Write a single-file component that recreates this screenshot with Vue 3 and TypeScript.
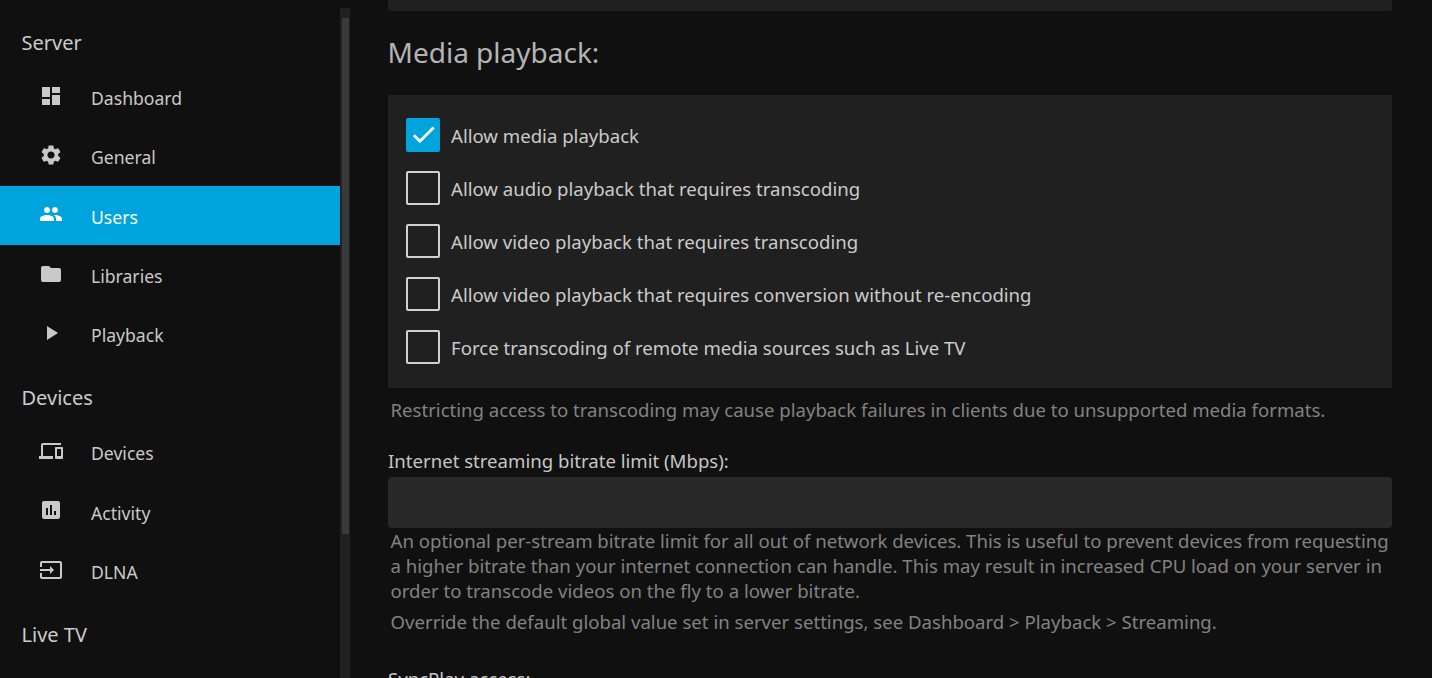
<script setup lang="ts">
interface NavItem {
  label: string
  icon: string
  active?: boolean
}

interface NavSection {
  title: string
  items: NavItem[]
}

const sections: NavSection[] = [
  {
    title: 'Server',
    items: [
      { label: 'Dashboard', icon: 'M3 13h8V3H3v10zm0 8h8v-6H3v6zm10 0h8V11h-8v10zm0-18v6h8V3h-8z' },
      {
        label: 'General',
        icon: 'M19.14 12.94c.04-.3.06-.61.06-.94 0-.32-.02-.64-.07-.94l2.03-1.58c.18-.14.23-.41.12-.61l-1.92-3.32c-.12-.22-.37-.29-.59-.22l-2.39.96c-.5-.38-1.03-.7-1.62-.94l-.36-2.54c-.04-.24-.24-.41-.48-.41h-3.84c-.24 0-.43.17-.47.41l-.36 2.54c-.59.24-1.13.57-1.62.94l-2.39-.96c-.22-.08-.47 0-.59.22L2.74 8.87c-.12.21-.08.47.12.61l2.03 1.58c-.05.3-.09.63-.09.94s.02.64.07.94l-2.03 1.58c-.18.14-.23.41-.12.61l1.92 3.32c.12.22.37.29.59.22l2.39-.96c.5.38 1.03.7 1.62.94l.36 2.54c.05.24.24.41.48.41h3.84c.24 0 .44-.17.47-.41l.36-2.54c.59-.24 1.13-.56 1.62-.94l2.39.96c.22.08.47 0 .59-.22l1.92-3.32c.12-.22.07-.47-.12-.61l-2.01-1.58zM12 15.6c-1.98 0-3.6-1.62-3.6-3.6s1.62-3.6 3.6-3.6 3.6 1.62 3.6 3.6-1.62 3.6-3.6 3.6z',
      },
      {
        label: 'Users',
        active: true,
        icon: 'M16 11c1.66 0 2.99-1.34 2.99-3S17.66 5 16 5c-1.66 0-3 1.34-3 3s1.34 3 3 3zm-8 0c1.66 0 2.99-1.34 2.99-3S9.66 5 8 5C6.34 5 5 6.34 5 8s1.34 3 3 3zm0 2c-2.33 0-7 1.17-7 3.5V19h14v-2.5c0-2.33-4.67-3.5-7-3.5zm8 0c-.29 0-.62.02-.97.05 1.16.84 1.97 1.97 1.97 3.45V19h6v-2.5c0-2.33-4.67-3.5-7-3.5z',
      },
      { label: 'Libraries', icon: 'M10 4H4c-1.1 0-1.99.9-1.99 2L2 18c0 1.1.9 2 2 2h16c1.1 0 2-.9 2-2V8c0-1.1-.9-2-2-2h-8l-2-2z' },
      { label: 'Playback', icon: 'M8 5v14l11-7z' },
    ],
  },
  {
    title: 'Devices',
    items: [
      {
        label: 'Devices',
        icon: 'M4 6h18V4H4c-1.1 0-2 .9-2 2v11H0v3h14v-3H4V6zm19 2h-6c-.55 0-1 .45-1 1v10c0 .55.45 1 1 1h6c.55 0 1-.45 1-1V9c0-.55-.45-1-1-1zm-1 9h-4v-7h4v7z',
      },
      {
        label: 'Activity',
        icon: 'M19 3H5c-1.1 0-2 .9-2 2v14c0 1.1.9 2 2 2h14c1.1 0 2-.9 2-2V5c0-1.1-.9-2-2-2zM9 17H7v-7h2v7zm4 0h-2V7h2v10zm4 0h-2v-4h2v4z',
      },
      {
        label: 'DLNA',
        icon: 'M21 3.01H3c-1.1 0-2 .9-2 2V9h2V4.99h18v14.03H3V15H1v4.01c0 1.1.9 1.98 2 1.98h18c1.1 0 2-.88 2-1.98v-14c0-1.11-.9-2-2-2zM11 16l4-4-4-4v3H1v2h10v3z',
      },
    ],
  },
  {
    title: 'Live TV',
    items: [
      {
        label: 'Live TV',
        icon: 'M21 6h-7.59l3.29-3.29L16 2l-4 4-4-4-.71.71L10.59 6H3c-1.1 0-2 .89-2 2v12c0 1.1.9 2 2 2h18c1.1 0 2-.9 2-2V8c0-1.11-.9-2-2-2zm0 14H3V8h18v12zM9 10v8l6-4z',
      },
    ],
  },
]

const checks = [
  { label: 'Allow media playback', checked: true },
  { label: 'Allow audio playback that requires transcoding', checked: false },
  { label: 'Allow video playback that requires transcoding', checked: false },
  { label: 'Allow video playback that requires conversion without re-encoding', checked: false },
  { label: 'Force transcoding of remote media sources such as Live TV', checked: false },
]
</script>

<template>
  <div class="page">
    <nav class="sidebar">
      <div class="nav-scroll">
        <section v-for="section in sections" :key="section.title" class="nav-section">
          <h3 class="nav-title">{{ section.title }}</h3>
          <a
            v-for="item in section.items"
            :key="item.label"
            class="nav-link"
            :class="{ active: item.active }"
          >
            <svg class="nav-icon" viewBox="0 0 24 24" fill="currentColor">
              <path :d="item.icon" />
            </svg>
            <span>{{ item.label }}</span>
          </a>
        </section>
      </div>
      <div class="scrollbar">
        <div class="scroll-arrow" />
        <div class="scroll-thumb" />
      </div>
    </nav>

    <main class="content">
      <div class="top-panel" />
      <h2 class="heading">Media playback:</h2>

      <div class="check-panel">
        <label v-for="check in checks" :key="check.label" class="check-row">
          <span class="box" :class="{ checked: check.checked }">
            <svg v-if="check.checked" class="tick" viewBox="0 0 24 24" width="29" height="29" fill="#fff" stroke="#fff" stroke-width=".4">
              <path d="M9 16.17 4.83 12l-1.42 1.41L9 19 21 7l-1.41-1.41z" />
            </svg>
          </span>
          <span>{{ check.label }}</span>
        </label>
      </div>
      <p class="hint first-hint">
        Restricting access to transcoding may cause playback failures in clients due to unsupported media formats.
      </p>

      <label class="field-label">Internet streaming bitrate limit (Mbps):</label>
      <div class="input" />
      <p class="hint bitrate-hint">
        An optional per-stream bitrate limit for all out of network devices. This is useful to prevent devices from requesting a higher bitrate than your internet connection can handle. This may result in increased CPU load on your server in order to transcode videos on the fly to a lower bitrate.
      </p>
      <p class="hint override-hint">
        Override the default global value set in server settings, see Dashboard &gt; Playback &gt; Streaming.
      </p>

      <label class="field-label syncplay">SyncPlay access:</label>
    </main>
  </div>
</template>

<style>
html,
body {
  margin: 0;
  overflow: hidden;
  background: #101010;
}
</style>

<style scoped>
.page {
  display: flex;
  height: 678px;
  overflow: hidden;
  background: #101010;
  font-family: "Noto Sans", sans-serif;
  color: #d1d1d1;
}

.sidebar {
  display: flex;
  flex: none;
  width: 350px;
  height: 678px;
  background: #101010;
}

.nav-scroll {
  width: 340px;
  height: 678px;
  overflow: hidden;
}

.nav-title {
  margin: 0;
  padding: 20.25px 0 11.75px 21.5px;
  font-size: 20px;
  font-weight: 400;
  line-height: 27px;
  color: #cbcbcb;
}

.nav-section:first-child .nav-title {
  padding-top: 28.5px;
  padding-bottom: 12px;
}

.nav-link {
  display: flex;
  align-items: center;
  box-sizing: border-box;
  height: 59.25px;
  padding: 2px 0 0 39px;
  font-size: 17.6px;
  color: #c9c9c9;
}

.nav-link.active {
  background: #00a4dc;
  color: #fff;
}

.nav-icon {
  flex: none;
  width: 24px;
  height: 24px;
  margin-top: -4.5px;
  margin-right: 28px;
}

.scrollbar {
  width: 10px;
  height: 678px;
  background: #202020;
}

.scroll-arrow {
  height: 8px;
  background: #101010;
  margin-bottom: 10px;
}

.scroll-thumb {
  width: 7px;
  height: 516px;
  margin-left: 2px;
  background: #3a3a3a;
}

.content {
  flex: 1;
  padding: 0 40px 0 38px;
  background: #101010;
}

.top-panel {
  height: 11px;
  background: #202020;
  border-radius: 0 0 2px 2px;
}

.heading {
  margin: 0 0 0 -0.5px;
  padding: 21px 0 23px;
  font-size: 28px;
  font-weight: 400;
  line-height: 40px;
  color: #b4b4b4;
}

.check-panel {
  display: flex;
  flex-direction: column;
  gap: 19px;
  padding: 23px 18px 24px;
  background: #202020;
}

.check-row {
  display: flex;
  align-items: center;
  height: 34px;
  font-size: 18.6px;
  color: #cbcbcb;
}

.box {
  display: flex;
  align-items: center;
  justify-content: center;
  flex: none;
  box-sizing: border-box;
  width: 34px;
  height: 34px;
  margin-right: 11px;
  border: 2px solid #d1d1d1;
  border-radius: 2px;
}

.box.checked {
  background: #00a4dc;
  border-color: #00a4dc;
}

.tick {
  flex: none;
  margin-top: -1px;
}

.hint {
  margin: 0;
  padding-left: 2.5px;
  font-size: 18.6px;
  line-height: 25px;
  color: #828282;
}

.first-hint {
  padding-top: 9px;
  padding-bottom: 27px;
}

.field-label {
  display: block;
  font-size: 18.6px;
  line-height: 24px;
  color: #c6c6c6;
}

.input {
  height: 51px;
  margin-top: 4px;
  background: #292929;
  border-radius: 4px;
}

.override-hint {
  padding-top: 6px;
}

.syncplay {
  margin-top: 33px;
}
</style>
